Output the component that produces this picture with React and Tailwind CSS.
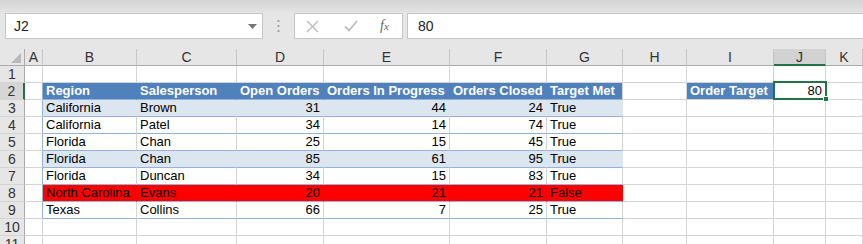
import clsx from 'clsx';

const cols = [
  { key: 'A', w: 'w-[18px]' },
  { key: 'B', w: 'w-[94px]' },
  { key: 'C', w: 'w-[100px]' },
  { key: 'D', w: 'w-[87px]' },
  { key: 'E', w: 'w-[126px]' },
  { key: 'F', w: 'w-[97px]' },
  { key: 'G', w: 'w-[76px]' },
  { key: 'H', w: 'w-[64px]' },
  { key: 'I', w: 'w-[87px]' },
  { key: 'J', w: 'w-[52px]' },
  { key: 'K', w: 'w-[37px]' },
];

const table = [
  { style: 'head', cells: ['Region', 'Salesperson', 'Open Orders', 'Orders In Progress', 'Orders Closed', 'Target Met'] },
  { style: 'band', cells: ['California', 'Brown', 31, 44, 24, 'True'] },
  { style: 'plain', cells: ['California', 'Patel', 34, 14, 74, 'True'] },
  { style: 'plain', cells: ['Florida', 'Chan', 25, 15, 45, 'True'] },
  { style: 'band', cells: ['Florida', 'Chan', 85, 61, 95, 'True'] },
  { style: 'plain', cells: ['Florida', 'Duncan', 34, 15, 83, 'True'] },
  { style: 'red', cells: ['North Carolina', 'Evans', 20, 21, 21, 'False'] },
  { style: 'plain', cells: ['Texas', 'Collins', 66, 7, 25, 'True'] },
];

const fills = {
  head: 'bg-[#4f81bd] border-r-[#4f81bd] text-white font-bold',
  band: 'bg-[#dce6f1] border-r-[#dce6f1]',
  plain: 'bg-white border-r-[#d4d4d4]',
  red: 'bg-[#ff0000] border-r-[#ff0000]',
};

function Cell({ col, className, children, right }) {
  return (
    <div
      className={clsx(
        'h-[17px] shrink-0 border-r border-b border-[#d4d4d4] px-[3px] text-[13px] leading-[16px] whitespace-nowrap overflow-visible text-black',
        col.w,
        right && 'text-right',
        className
      )}
    >
      {children}
    </div>
  );
}

function SheetRow({ n }) {
  const t = n >= 2 && n <= 9 ? table[n - 2] : null;
  return (
    <div className="flex">
      <div
        className={clsx(
          'w-[25px] h-[17px] shrink-0 border-b border-[#d4d4d4] text-center text-[14px] leading-[16px] text-[#333]',
          n === 2 ? 'bg-[#d6d6d6] border-r-2 border-r-[#217346]' : 'bg-[#e6e6e6] border-r border-r-[#ababab]'
        )}
      >
        {n}
      </div>
      {cols.map((col, i) => {
        if (t && i >= 1 && i <= 6) {
          const v = t.cells[i - 1];
          const num = typeof v === 'number';
          return (
            <Cell
              key={col.key}
              col={col}
              right={num}
              className={clsx(fills[t.style], t.style !== 'head' && 'border-b-[#95b3d7]', t.style === 'head' && 'border-b-[#95b3d7]', i === 6 && t.style === 'head' && 'border-r-[#d4d4d4]')}
            >
              {v}
            </Cell>
          );
        }
        if (n === 2 && col.key === 'I') {
          return (
            <Cell key={col.key} col={col} className="bg-[#4f81bd] text-white font-bold border-r-[#4f81bd]">
              Order Target
            </Cell>
          );
        }
        if (n === 2 && col.key === 'J') {
          return (
            <Cell key={col.key} col={col} right className="bg-white">
              80
            </Cell>
          );
        }
        return (
          <Cell
            key={col.key}
            col={col}
            className={clsx('bg-white', col.key === 'A' && n >= 2 && n <= 9 && 'border-r-[#95b3d7]', n === 9 && i >= 1 && i <= 6 && 'border-b-[#95b3d7]')}
          />
        );
      })}
    </div>
  );
}

export default function App() {
  return (
    <div className="relative w-[863px] h-[244px] overflow-hidden bg-[#e6e6e6] font-['Liberation_Sans',Arial,sans-serif]">
      <div className="h-[12px] bg-gradient-to-b from-[#d4d4d4] to-[#e3e3e3]" />

      <div className="flex h-[37px] pt-[1px]">
        <div className="ml-[5px] w-[258px] h-[26px] bg-white border border-[#c6c6c6] flex items-center justify-between pl-[8px] pr-[5px]">
          <span className="text-[14px] text-[#222]">J2</span>
          <svg width="9" height="5" viewBox="0 0 9 5"><path d="M0 0h9L4.5 5z" fill="#777" /></svg>
        </div>
        <div className="w-[31px] h-[26px] flex items-center justify-center">
          <svg width="3" height="12" viewBox="0 0 3 12">
            <rect x="0.5" y="0" width="2" height="2" fill="#a6a6a6" />
            <rect x="0.5" y="5" width="2" height="2" fill="#a6a6a6" />
            <rect x="0.5" y="10" width="2" height="2" fill="#a6a6a6" />
          </svg>
        </div>
        <div className="w-[109px] h-[26px] bg-white border border-[#c6c6c6] flex items-center pl-[11px]">
          <svg width="13" height="13" viewBox="0 0 13 13"><path d="M1 1l11 11M12 1L1 12" stroke="#bdbdbd" strokeWidth="1.5" /></svg>
          <svg className="ml-[25px]" width="14" height="12" viewBox="0 0 14 12"><path d="M1 6.5l4 4L13 1" stroke="#bdbdbd" strokeWidth="1.8" fill="none" /></svg>
          <span className="ml-[22px] text-[14px] italic text-[#666] font-['Liberation_Serif',serif] leading-none">f<span className="text-[11px]">x</span></span>
        </div>
        <div className="ml-[4px] flex-1 h-[26px] bg-white border border-r-0 border-[#c6c6c6] flex items-center pl-[10px]">
          <span className="text-[14px] text-[#222]">80</span>
        </div>
      </div>

      <div className="flex h-[17px]">
        <div className="w-[25px] shrink-0 border-r border-b border-[#ababab] bg-[#e6e6e6] relative">
          <svg className="absolute right-[3px] bottom-[2px]" width="10" height="10" viewBox="0 0 10 10"><path d="M10 0v10H0z" fill="#b9b9b9" /></svg>
        </div>
        {cols.map((col) => (
          <div
            key={col.key}
            className={clsx(
              'shrink-0 h-[17px] border-r border-r-[#c6c6c6] text-center text-[14px] leading-[16px] text-[#333]',
              col.w,
              col.key === 'J' ? 'bg-[#d2d2d2] border-b-2 border-b-[#217346] leading-[15px]' : 'bg-[#e6e6e6] border-b border-b-[#ababab]'
            )}
          >
            {col.key}
          </div>
        ))}
      </div>

      <div className="bg-white">
        {[1, 2, 3, 4, 5, 6, 7, 8, 9, 10, 11].map((n) => (
          <SheetRow key={n} n={n} />
        ))}
      </div>

      <div className="absolute left-[773px] top-[81px] w-[54px] h-[19px] border-2 border-[#217346]" />
      <div className="absolute left-[823px] top-[96px] w-[6px] h-[6px] bg-[#217346] border border-white" />
    </div>
  );
}
